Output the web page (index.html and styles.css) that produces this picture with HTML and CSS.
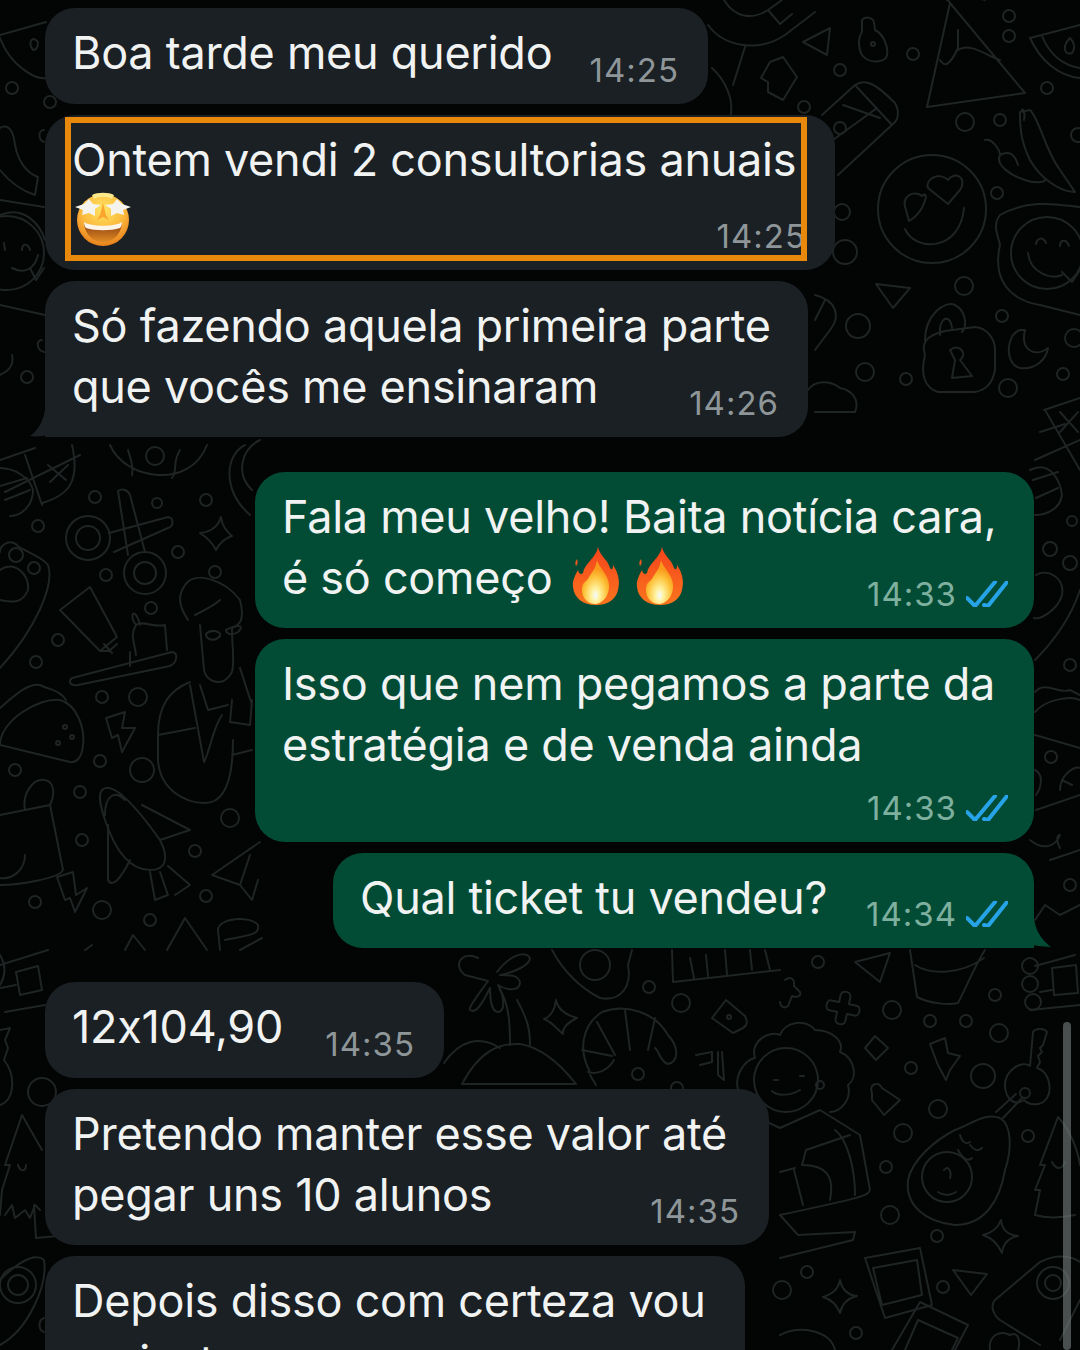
FILE: index.html
```html
<!DOCTYPE html>
<html lang="pt-BR">
<head>
<meta charset="utf-8">
<title>Conversa</title>
<link rel="stylesheet" href="styles.css">
</head>
<body>
<main class="page">
<svg class="doodles" viewBox="0 0 1080 1350" aria-hidden="true">
  <!-- top right -->
  <path d="M708 25 C725 48 760 52 785 35 L815 12 M745 47 L733 85 M730 118 C735 100 725 80 712 68 M724 0 C735 18 752 20 768 10 L782 0 M768 10 L780 24 L792 14"/>
  <path d="M770 62 L783 57 L797 77 L783 100 L768 92 L768 82 L761 78 L770 62Z"/>
  <path d="M803 42 L830 28 L827 55Z"/>
  <path d="M862 20 C865 16 872 17 874 22 L875 30 C884 34 890 50 886 58 C880 63 868 63 862 55 C858 48 858 38 862 32Z"/>
  <circle cx="873" cy="44" r="2"/><circle cx="913" cy="54" r="6"/><circle cx="840" cy="70" r="6"/><circle cx="1009" cy="16" r="6"/><circle cx="1009" cy="36" r="6"/><circle cx="1047" cy="88" r="6"/>
  <path d="M927 107 L950 3 L1025 93Z M950 3 C945 -6 925 -5 915 -2 M958 30 L958 48 C950 65 945 68 940 60 M958 50 C970 42 985 55 1000 60 M985 0 L978 -2"/>
  <path d="M1030 38 C1040 60 1058 76 1080 78 M1030 38 L1080 25 M1042 36 C1050 56 1065 66 1080 68 M1070 38 C1062 46 1064 56 1072 53 C1076 48 1074 42 1070 38Z"/>
  <path d="M822 115 L855 85 C866 78 876 84 895 103 C900 112 898 120 893 124 L838 175 M855 85 L892 125 M843 105 L880 118 M826 145 L877 108"/>
  <circle cx="804" cy="107" r="6"/><circle cx="840" cy="128" r="6"/><circle cx="965" cy="122" r="9"/><circle cx="1000" cy="120" r="6"/><circle cx="1078" cy="135" r="7"/>
  <circle cx="932" cy="209" r="54"/>
  <path d="M905 229 C915 252 960 252 964 208"/>
  <path d="M906 210 C900 195 915 190 922 196 C930 188 925 212 909 221Z"/>
  <path d="M928 188 C925 178 940 172 948 180 C955 170 968 178 960 190 L948 204Z"/>
  <path d="M985 140 C992 138 1000 150 1000 155 C995 165 1010 175 1025 180 C1035 184 1045 182 1045 180 M1000 155 C1010 150 1015 155 1018 165"/>
  <path d="M1020 112 L1030 110 C1040 120 1045 150 1060 170 L1075 192 C1060 192 1040 178 1030 160 C1020 140 1020 125 1020 112Z M1022 110 C1022 108 1026 112 1024 120"/>
  <circle cx="997" cy="193" r="6"/>
  <path d="M1000 215 C1030 198 1060 205 1080 207 M1000 245 C992 280 1010 300 1040 305 L1080 315 M1000 215 C992 225 998 235 1000 245"/>
  <circle cx="1047" cy="253" r="36"/>
  <path d="M1028 253 C1030 272 1050 280 1062 275 M1036 244 C1037 238 1043 236 1046 243 M1060 246 C1060 240 1066 238 1069 246 M1062 272 L1072 282 L1080 270"/>
  <circle cx="964" cy="286" r="9"/>
  <path d="M876 284 L910 288 L893 308Z"/>
  <circle cx="858" cy="326" r="12"/><circle cx="865" cy="372" r="9"/><circle cx="906" cy="379" r="6"/><circle cx="842" cy="212" r="8"/><circle cx="845" cy="252" r="12"/>
  <circle cx="1002" cy="316" r="6"/>
  <path d="M925 355 C920 340 930 335 945 331 L975 327 C988 328 995 340 995 350 L995 370 C992 385 985 390 975 392 L938 392 C925 388 920 375 925 355Z M925 340 C925 315 945 300 955 305 C965 310 968 325 962 332 M940 335 C938 318 950 312 952 328"/>
  <path d="M950 350 C960 342 968 355 960 360 L972 376 L952 378 L955 360Z"/>
  <path d="M1020 330 C1005 335 1005 365 1020 368 C1035 370 1046 360 1048 348 C1035 358 1020 350 1025 330Z"/>
  <circle cx="1074" cy="338" r="9"/><circle cx="1063" cy="374" r="6"/><circle cx="1008" cy="388" r="9"/>
  <path d="M815 295 C835 300 842 315 830 330 L815 350 M825 300 L815 320 M808 390 C815 380 830 380 840 388 C852 390 860 400 855 412 L815 412"/>

  <!-- top left -->
  <path d="M0 38 C10 65 35 80 46 78 M0 35 L46 22 M33 50 C27 42 33 35 38 42 C38 48 36 50 33 50Z"/>
  <circle cx="12" cy="88" r="6"/><circle cx="50" cy="102" r="6"/><path d="M44 130 C38 130 38 140 44 142"/>
  <path d="M0 128 C10 122 14 135 15 145 C18 160 25 172 38 177 L35 195 C20 190 8 180 0 170"/>
  <path d="M0 200 L44 207 M0 305 L45 315 M0 215 C25 205 40 225 45 240"/>
  <circle cx="7" cy="253" r="37"/>
  <path d="M5 250 L4 243 M22 250 C22 243 28 243 30 250 M12 268 C25 275 35 268 38 255 M30 268 L36 280 L44 268"/>
  <path d="M12 355 C15 368 5 372 0 375"/>
  <circle cx="27" cy="377" r="6"/>
  <path d="M42 340 C36 340 36 350 44 352"/>

  <!-- under third bubble -->
  <path d="M0 460 L35 448 M5 492 L80 455 M25 455 L42 505 M42 503 C70 495 80 480 72 445 M48 465 L66 480 M68 465 L50 482 M0 468 C15 468 30 478 33 490 C33 505 22 516 10 516 M0 486 L27 478 M5 500 L30 490"/>
  <path d="M110 445 C125 480 190 490 207 445 M128 450 C130 458 134 465 132 475 M180 450 C172 462 178 470 172 478"/>
  <circle cx="155" cy="456" r="9"/>
  <path d="M245 445 C225 455 222 490 250 515 M260 440 C240 450 236 475 252 490"/>
  <path d="M1080 440 L1035 460 M1044 410 L1080 398 M1045 410 L1080 470 M1040 432 L1065 424 M1060 412 L1078 432 M1078 412 L1060 432 M1030 470 C1050 460 1060 480 1062 495 C1060 510 1045 515 1035 515 M1033 480 L1058 472 M1036 498 L1058 488"/>
  <circle cx="1072" cy="521" r="5"/><circle cx="1050" cy="549" r="7"/><circle cx="1070" cy="563" r="7"/>
  <path d="M1036 575 C1048 568 1065 578 1062 595 C1058 610 1040 620 1034 618 M1080 590 C1070 620 1050 645 1035 660"/>
  <circle cx="1070" cy="665" r="6"/>
  <path d="M1035 692 C1045 680 1060 695 1070 690 L1080 695 M1035 712 C1045 700 1070 695 1080 700 M1035 735 L1080 748"/>
  <circle cx="1051" cy="757" r="6"/>
  <path d="M1035 770 C1045 775 1040 790 1036 795 M1060 790 C1060 775 1075 765 1080 768 M1062 780 L1072 785 M1036 810 L1080 795 M1030 840 C1042 850 1055 848 1060 835 C1055 835 1058 845 1060 848 M1050 860 L1080 850"/>
  <circle cx="1070" cy="885" r="6"/>
  <path d="M1035 920 L1045 905 L1060 915 L1080 905"/>

  <!-- scissors -->
  <circle cx="88" cy="538" r="22"/><circle cx="88" cy="538" r="12"/>
  <circle cx="145" cy="573" r="21"/><circle cx="145" cy="573" r="11"/>
  <path d="M109 533 L168 517 C174 518 174 526 168 528 L114 552 M118 491 C122 488 128 490 130 495 L145 552 M118 491 L128 555"/>
  <circle cx="95" cy="497" r="6"/><circle cx="38" cy="526" r="6"/><circle cx="157" cy="503" r="5"/><circle cx="206" cy="500" r="6"/><circle cx="178" cy="552" r="6"/><circle cx="106" cy="575" r="6"/><circle cx="215" cy="572" r="6"/><circle cx="151" cy="608" r="6"/>
  <path d="M221 517 C222 527 228 532 232 536 C226 538 220 542 216 550 C212 542 208 538 200 533 C210 532 218 527 221 517Z"/>
  <path d="M0 552 C0 545 10 538 18 546 C25 552 40 555 48 565 C55 585 35 630 0 668 M0 570 C15 560 30 575 28 590 C22 605 10 602 0 600"/>
  <circle cx="16" cy="555" r="7"/><circle cx="34" cy="568" r="6"/>
  <!-- toothpaste + brush -->
  <path d="M60 610 L90 587 L117 637 L100 651 Z M100 651 L109 651 L117 644 M104 644 L112 653"/>
  <circle cx="58" cy="640" r="6"/><circle cx="36" cy="662" r="6"/>
  <path d="M72 678 L172 652 C178 652 178 662 170 666 L78 685 C70 686 68 682 72 678Z M130 666 L130 652 M136 625 C130 635 134 640 136 655 M136 625 C142 620 155 628 165 625 L167 650 M136 625 C128 615 135 605 140 625"/>
  <circle cx="102" cy="697" r="6"/><circle cx="138" cy="697" r="9"/>
  <!-- man -->
  <path d="M188 620 C178 605 178 595 185 585 C195 570 225 580 240 600 C245 620 240 625 232 628 C232 650 235 660 232 672 C222 690 205 680 204 670 L200 625 M195 615 C205 610 215 605 220 600"/>
  <path d="M206 634 C212 628 222 632 220 636 C215 642 206 640 206 634Z M226 630 C236 625 246 624 238 632 C232 636 226 634 226 630Z"/>
  <path d="M190 682 C170 690 158 705 158 735 L158 760 C160 790 185 803 205 803 C222 803 233 785 233 740 M158 735 L195 728 M190 685 L204 762 C212 745 212 730 222 715 M200 685 L208 710 L228 705 M232 700 L230 722 L250 725 L252 700 M240 668 L252 705 M232 755 L252 750"/>
  <!-- taco -->
  <path d="M0 745 C0 720 40 697 60 700 C78 705 85 730 83 745 C82 758 76 763 70 762 L0 745 M0 708 C15 695 28 683 40 685 C50 690 60 690 66 700"/>
  <circle cx="65" cy="727" r="2"/><circle cx="72" cy="737" r="2"/><circle cx="58" cy="743" r="2"/>
  <circle cx="15" cy="770" r="6"/><circle cx="100" cy="761" r="6"/><circle cx="80" cy="792" r="6"/><circle cx="142" cy="770" r="12"/>
  <path d="M106 718 L125 712 L122 728 L135 728 L122 752 L118 735 L112 738Z"/>
  <!-- bag -->
  <path d="M0 815 L50 805 L63 870 C60 878 20 885 0 885 M25 810 C22 795 32 778 45 780 C55 782 55 795 50 805 M0 878 C12 880 25 870 25 855"/>
  <circle cx="82" cy="840" r="6"/><circle cx="35" cy="902" r="6"/><circle cx="102" cy="910" r="9"/><circle cx="150" cy="920" r="6"/><circle cx="195" cy="851" r="6"/><circle cx="206" cy="896" r="6"/><circle cx="230" cy="818" r="9"/>
  <path d="M57 877 L73 872 L76 895 L87 888 L75 912 L70 898 L65 900Z"/>
  <!-- rocket -->
  <path d="M102 790 C112 780 135 805 160 840 C170 860 165 870 150 870 C130 870 115 850 105 820 C100 805 98 795 102 790Z M105 815 C105 795 115 790 125 800 M142 805 L190 830 L160 840 M108 825 L108 880 C112 888 120 880 130 860 M150 872 L155 900 L168 895 L160 872 M168 866 L190 885 L175 895"/>
  <path d="M212 875 L260 842 M212 875 L240 885 L252 900 L258 880 M240 885 L250 855"/>
  <path d="M167 950 L185 918 L207 950 M125 950 L133 935 L145 950 M85 950 L92 945 M220 950 L218 930 C218 918 250 915 258 925 C260 935 250 935 225 940 M240 950 L262 938"/>
  <!-- log house left -->
  <path d="M0 965 L48 950 M5 1012 L45 1005 M16 972 L38 966 L42 990 L20 995Z M0 988 L16 985 M0 955 C6 965 6 975 0 985"/>
  <path d="M0 1030 L10 1028 L5 1040 L8 1048 L4 1060 C16 1075 15 1100 0 1105"/>
  <circle cx="42" cy="1092" r="14"/>
  <path d="M22 1115 L5 1165 L10 1165 L2 1190 L0 1215 M22 1115 L42 1150 M5 1215 L12 1205 L15 1218 L25 1210 L30 1218 L35 1205 L40 1210 M34 1205 L36 1238 L58 1236 M18 1165 C20 1172 26 1172 26 1165"/>
  <path d="M0 1280 C25 1255 38 1255 44 1260 C48 1285 28 1330 0 1345"/>
  <circle cx="18" cy="1285" r="18"/><circle cx="18" cy="1285" r="10"/>
  <path d="M44 1318 C38 1320 38 1330 44 1332"/>

  <!-- bottom middle -->
  <path d="M478 958 C462 950 452 965 465 975 L488 981 C478 995 468 1008 470 1010 C476 1014 482 1004 490 988 C490 1000 492 1012 498 1012 C506 1012 504 995 498 985 C510 992 520 990 520 982 C518 975 510 975 500 975 C515 972 530 965 530 958 C525 950 510 955 497 972"/>
  <path d="M500 990 C510 1005 510 1030 510 1045 M517 1000 C528 1020 530 1030 530 1045"/>
  <path d="M444 1063 C460 1040 480 1035 500 1048 M462 1084 C480 1050 500 1043 520 1044 C545 1048 565 1070 576 1084 Z"/>
  <path d="M552 950 C560 965 575 985 600 998 C622 1002 632 985 628 965 L632 950"/>
  <circle cx="595" cy="965" r="15"/>
  <path d="M556 1000 C558 1010 566 1015 577 1018 C568 1022 562 1028 563 1034 C556 1028 552 1022 544 1019 C552 1016 555 1008 556 1000Z"/>
  <circle cx="649" cy="987" r="6"/><circle cx="681" cy="1003" r="9"/><circle cx="638" cy="1074" r="6"/><circle cx="677" cy="1088" r="6"/>
  <path d="M672 950 L673 982 L780 970 M690 958 L694 978 M706 955 L708 976 M725 950 L727 975 M750 950 L752 970 M765 950 L770 970"/>
  <path d="M590 1072 C578 1050 582 1025 602 1012 C625 1003 655 1012 668 1035 C680 1048 678 1062 668 1064 C660 1062 660 1052 655 1048 M597 1022 L615 1055 M625 1010 L630 1050 M655 1018 L648 1050 M582 1050 L612 1056 M588 1072 C598 1075 608 1070 614 1060"/>
  <path d="M590 1075 L596 1085"/>
  <path d="M712 1018 L726 1000 L745 1016 C748 1022 747 1026 743 1028 L733 1033 L712 1018Z"/><circle cx="729" cy="1017" r="2"/>
  <path d="M696 1055 L712 1052 L712 1062 L700 1065 M718 1052 L718 1075 L724 1080 L722 1052"/>
  <path d="M738 1090 C734 1075 745 1060 755 1058 C750 1042 768 1030 780 1035 C785 1022 805 1018 815 1030 C830 1030 845 1040 840 1052 C855 1058 858 1078 848 1085 C852 1100 840 1112 830 1112"/>
  <circle cx="786" cy="1080" r="32"/>
  <path d="M772 1091 C777 1096 790 1096 800 1090 M774 1080 L778 1080 M800 1076 L804 1076"/>
  <circle cx="820" cy="1085" r="4"/>
  <path d="M752 1115 L780 1128 L820 1110 L860 1135 L870 1190 C868 1196 860 1198 780 1215 M835 1130 C848 1140 855 1170 855 1195 M806 1150 L850 1135 M806 1150 L802 1165 C825 1165 835 1175 830 1200 M794 1170 L803 1205 M795 1168 L780 1172"/>
  <path d="M780 1215 L798 1235 L855 1232 L853 1240 L780 1258"/>
  <!-- bottom right -->
  <circle cx="818" cy="962" r="6"/>
  <path d="M855 962 L890 953 L880 982Z"/>
  <path d="M910 950 L917 997 C930 1004 950 1005 958 1003 C970 980 975 965 985 950 M915 965 C930 975 960 975 984 958"/>
  <path d="M785 980 C790 976 795 978 794 986 L800 992 C802 996 796 998 792 996 L788 1006 C782 1010 780 1004 780 1002"/>
  <path d="M838 996 C838 990 848 990 848 996 L848 1003 L856 1003 C861 1003 861 1013 856 1013 L848 1013 L848 1020 C848 1026 838 1026 838 1020 L838 1013 L830 1013 C825 1013 825 1003 830 1003 L838 1003Z" transform="rotate(12 843 1008)"/>
  <circle cx="892" cy="1010" r="9"/><circle cx="930" cy="1021" r="6"/><circle cx="966" cy="1021" r="6"/><circle cx="999" cy="1033" r="9"/><circle cx="995" cy="995" r="6"/>
  <path d="M1035 966 L1075 955 M1030 1010 L1080 1005 M1052 968 L1076 965 L1078 993 L1054 995Z M1040 992 L1052 990"/>
  <circle cx="1030" cy="966" r="8"/><circle cx="1030" cy="984" r="8"/><circle cx="1033" cy="1002" r="8"/>
  <path d="M865 1048 L875 1036 L888 1048 L876 1060Z"/>
  <path d="M930 1044 L945 1038 L948 1053 L960 1056 L950 1070 L946 1080 L938 1065 L936 1060Z"/>
  <circle cx="911" cy="1068" r="6"/><circle cx="938" cy="1109" r="9"/><circle cx="903" cy="1133" r="9"/><circle cx="886" cy="1167" r="6"/><circle cx="983" cy="1076" r="12"/><circle cx="1028" cy="1136" r="6"/>
  <path d="M872 1093 C868 1085 878 1080 882 1088 L900 1100 L884 1115 L872 1100Z"/>
  <!-- key -->
  <path d="M1033 1032 C1035 1028 1045 1028 1047 1032 L1043 1045 L1040 1048 L1042 1052 L1038 1056 L1040 1062 L1037 1068 C1050 1072 1052 1090 1047 1098 C1042 1106 1030 1106 1024 1100 C1012 1108 1005 1095 1005 1085 C1005 1070 1022 1060 1030 1066 Z"/>
  <circle cx="1025" cy="1093" r="5"/>
  <path d="M1003 1118 L1022 1098 M996 1112 L1016 1094"/>
  <!-- avocado -->
  <path d="M1000 1118 C1012 1125 1012 1150 1005 1170 C1000 1200 985 1225 955 1225 C925 1222 905 1205 908 1180 C912 1160 935 1140 955 1130 C970 1125 985 1112 1000 1118Z"/>
  <circle cx="947" cy="1177" r="25"/>
  <path d="M938 1192 C944 1196 950 1196 956 1192 M944 1170 C948 1164 952 1172 950 1178 M958 1150 C962 1158 968 1162 972 1158 M970 1145 C974 1150 978 1152 982 1148 M960 1135 C962 1142 966 1145 970 1142"/>
  <!-- tree -->
  <path d="M1058 1117 L1040 1165 L1045 1165 L1035 1190 L1040 1190 L1035 1215 C1045 1218 1060 1218 1075 1215 M1058 1117 C1070 1130 1078 1150 1080 1165 M1052 1162 C1056 1170 1062 1170 1065 1162"/>
  <path d="M1001 1220 C1002 1230 1008 1235 1018 1236 C1008 1238 1003 1244 1002 1253 C998 1244 992 1238 983 1235 C992 1233 998 1228 1001 1220Z"/>
  <circle cx="937" cy="1236" r="6"/><circle cx="890" cy="1215" r="9"/><circle cx="807" cy="1272" r="6"/><circle cx="943" cy="1287" r="6"/><circle cx="856" cy="1333" r="6"/><circle cx="782" cy="1290" r="9"/>
  <path d="M840 1280 C842 1290 848 1295 857 1296 C848 1298 842 1304 840 1313 C836 1304 832 1300 823 1297 C832 1294 838 1290 840 1280Z"/>
  <path d="M865 1258 L920 1248 L932 1305 L885 1318 L865 1258Z M873 1268 L917 1260 L922 1295 L882 1305Z"/>
  <path d="M920 1302 L968 1325 L955 1350 M892 1350 L920 1302 M918 1320 L958 1338 L952 1350 M905 1350 L918 1320"/>
  <path d="M953 1270 L987 1274 L971 1295Z"/>
  <path d="M995 1300 L1040 1262 C1060 1252 1075 1258 1080 1262 M995 1300 C990 1305 993 1315 1000 1320 L1040 1345 M1080 1300 L1060 1340"/>
  <circle cx="1053" cy="1283" r="16"/><circle cx="1053" cy="1283" r="8"/>
  <path d="M990 1350 C988 1335 1000 1330 1010 1335 C1020 1330 1020 1345 1018 1350"/>
  <path d="M780 1335 C800 1325 830 1330 835 1350"/>
</svg>

<section class="chat">
  <article class="msg in w1">
    <p class="text">Boa tarde meu querido</p>
    <div class="meta"><time class="time">14:25</time></div>
  </article>
  <article class="msg in w2">
    <p class="text">Ontem vendi 2 consultorias anuais<br>
      <svg class="emoji star" viewBox="0 0 56 56" aria-label="emoji">
        <defs>
          <radialGradient id="face" cx="50%" cy="30%" r="70%"><stop offset="0" stop-color="#ffe463"/><stop offset=".6" stop-color="#fbb83c"/><stop offset="1" stop-color="#e8801c"/></radialGradient>
          <linearGradient id="mouth" x1="0" y1="0" x2="0" y2="1"><stop offset="0" stop-color="#8a3d10"/><stop offset="1" stop-color="#e08a24"/></linearGradient>
        </defs>
        <circle cx="28" cy="29" r="26" fill="url(#face)"/>
        <path d="M9 32 C16 37 40 37 47 32 C46 44 38 51 28 51 C18 51 10 44 9 32Z" fill="url(#mouth)"/>
        <path d="M9 31 C16 36 40 36 47 31 C47 34 46 36 45 37 C36 40 20 40 11 37 C10 36 9 34 9 31Z" fill="#fdf4ea"/>
        <path d="M14 8 L18 13 L26 14 L20 18 L20 25 L14 22 L7 24 L8 19 L0 16 L9 13Z" fill="#f5f3ee"/>
        <path d="M42 8 L38 13 L30 14 L36 18 L36 25 L42 22 L49 24 L48 19 L56 16 L47 13Z" fill="#f5f3ee"/>
        <path d="M28 12 L31 24 L34 29 L28 26 L22 29 L25 24Z" fill="#f9a52e"/>
        <path d="M17 4 C22 1 34 1 39 4 L37 8 C32 5 24 5 19 8Z" fill="#fbe88a"/>
      </svg>
    </p>
    <div class="meta"><time class="time">14:25</time></div>
    <span class="mark"></span>
  </article>
  <article class="msg in w3 last">
    <p class="text">Só fazendo aquela primeira parte<br>que vocês me ensinaram</p>
    <div class="meta"><time class="time">14:26</time></div>
    <svg class="tail tail-in" viewBox="0 0 24 40"><path d="M16 0 C16 20 10 32 0 39 C8 40 16 39 24 36 L24 0Z"/></svg>
  </article>

  <article class="msg out w4 group">
    <p class="text">Fala meu velho! Baita notícia cara,<br>é só começo
      <svg class="emoji fire" viewBox="0 0 48 60" aria-label="fogo"><use href="#flame"/></svg><svg class="emoji fire fire2" viewBox="0 0 48 60" aria-label="fogo">
        <defs>
          <linearGradient id="fl" x1="0" y1="0" x2="0" y2="1"><stop offset="0" stop-color="#f5431c"/><stop offset="1" stop-color="#f9751d"/></linearGradient>
          <radialGradient id="fi" cx="50%" cy="80%" r="60%"><stop offset="0" stop-color="#f4fbff"/><stop offset=".25" stop-color="#fff2a0"/><stop offset=".7" stop-color="#fdc23a"/><stop offset="1" stop-color="#f99a1c"/></radialGradient>
          <g id="flame">
            <path d="M26 1 C28 10 36 14 38 22 C40 25 41 22 41 19 C47 28 48 36 46 44 C44 53 36 59 24 59 C11 59 2 52 1 41 C0 34 4 28 6 24 C7 28 9 29 11 27 C12 18 24 12 26 1Z" fill="url(#fl)"/>
            <path d="M5 13 C6 16 6 18 4 20 C3 18 3 15 5 13Z" fill="#e9581e"/>
            <path d="M25 14 C27 22 36 28 37 38 C38 48 32 57 24 58 C14 58 9 50 10 42 C11 35 15 36 17 31 C20 26 24 22 25 14Z" fill="url(#fi)"/>
          </g>
        </defs>
        <use href="#flame"/>
      </svg>
    </p>
    <div class="meta"><time class="time">14:33</time><svg class="ticks" viewBox="0 0 42 26"><path d="M1 17 L9 25 L29 1 M18 24 L22 25 L41 1"/></svg></div>
  </article>
  <article class="msg out w4 tall">
    <p class="text">Isso que nem pegamos a parte da<br>estratégia e de venda ainda</p>
    <div class="meta"><time class="time">14:33</time><svg class="ticks" viewBox="0 0 42 26"><path d="M1 17 L9 25 L29 1 M18 24 L22 25 L41 1"/></svg></div>
  </article>
  <article class="msg out w5 last-out">
    <p class="text">Qual ticket tu vendeu?</p>
    <div class="meta"><time class="time">14:34</time><svg class="ticks" viewBox="0 0 42 26"><path d="M1 17 L9 25 L29 1 M18 24 L22 25 L41 1"/></svg></div>
    <svg class="tail tail-out" viewBox="0 0 24 46"><path d="M0 0 L6 2 C6 22 10 34 24 45 C14 44 8 44 2 42 L0 45Z"/></svg>
  </article>

  <article class="msg in w6 group-b">
    <p class="text">12x104,90</p>
    <div class="meta"><time class="time">14:35</time></div>
  </article>
  <article class="msg in w7">
    <p class="text">Pretendo manter esse valor até<br>pegar uns 10 alunos</p>
    <div class="meta"><time class="time">14:35</time></div>
  </article>
  <article class="msg in w8">
    <p class="text">Depois disso com certeza vou<br>reajustar</p>
  </article>
</section>
<div class="scrollbar"></div>
</main>
</body>
</html>
```

FILE: styles.css
```css
* { box-sizing: border-box; }
html, body { margin: 0; padding: 0; background: #030404; }
body { font-family: Inter, "Liberation Sans", sans-serif; }

.page {
  position: relative;
  width: 1080px;
  height: 1350px;
  overflow: hidden;
  background: #030404;
}

.doodles {
  position: absolute;
  inset: 0;
  width: 1080px;
  height: 1350px;
  fill: none;
  stroke: #1f2524;
  stroke-width: 2;
  stroke-linecap: round;
  stroke-linejoin: round;
}

.chat {
  position: relative;
  display: flex;
  flex-direction: column;
  gap: 11px;
  padding: 8px 46px 0 45px;
}

.msg {
  position: relative;
  display: grid;
  border-radius: 30px;
  padding: 14px 29px 18px 27px;
  flex: none;
}
.msg > .text, .msg > .meta { grid-area: 1 / 1; }

.in { background: #1a2023; align-self: flex-start; }
.out { background: #024c35; align-self: flex-end; }

.w1 { width: 663px; height: 96px; }
.w2 { width: 790px; height: 155px; }
.w3 { width: 763px; height: 156px; }
.w4 { width: 779px; height: 156px; padding-right: 26px; }
.w5 { width: 701px; height: 95px; padding-right: 26px; }
.w6 { width: 399px; height: 96px; }
.w7 { width: 724px; height: 156px; }
.w8 { width: 700px; height: 156px; }
.tall { height: 203px; }
.group { margin-top: 24px; }
.group-b { margin-top: 23px; }
.last { border-bottom-left-radius: 0; }
.last-out { border-bottom-right-radius: 0; }

.text {
  margin: 0;
  font-size: 45px;
  line-height: 61px;
  color: #f1f3f3;
  letter-spacing: -0.27px;
  white-space: nowrap;
}

.meta {
  display: flex;
  align-items: center;
  justify-self: end;
  align-self: end;
  gap: 9px;
  height: 40px;
  margin-bottom: -4px;
}
.time {
  font-size: 33px;
  letter-spacing: 1px;
  color: #8f9699;
}
.out .time { color: #7fb09f; }

.ticks {
  width: 42px;
  height: 26px;
  fill: none;
  stroke: #27a3e8;
  stroke-width: 4;
  stroke-linecap: round;
  stroke-linejoin: round;
}

.emoji { display: inline-block; }
.star { width: 56px; height: 56px; vertical-align: top; margin: 1px 0 0 3px; }
.fire { width: 48px; height: 60px; vertical-align: -12px; margin: -6px 0 0 7px; }
.fire2 { margin-left: 16px; }

.mark {
  position: absolute;
  left: 20px;
  top: 2px;
  width: 742px;
  height: 144px;
  border: 6px solid #e8890c;
}

.tail { position: absolute; bottom: 0; }
.tail-in { left: -15px; width: 24px; height: 40px; fill: #1a2023; }
.tail-out { right: -17px; width: 24px; height: 46px; fill: #024c35; }

.scrollbar {
  position: absolute;
  left: 1063px;
  top: 1022px;
  width: 8px;
  height: 328px;
  border-radius: 4px;
  background: rgba(120, 128, 128, 0.6);
}
```
